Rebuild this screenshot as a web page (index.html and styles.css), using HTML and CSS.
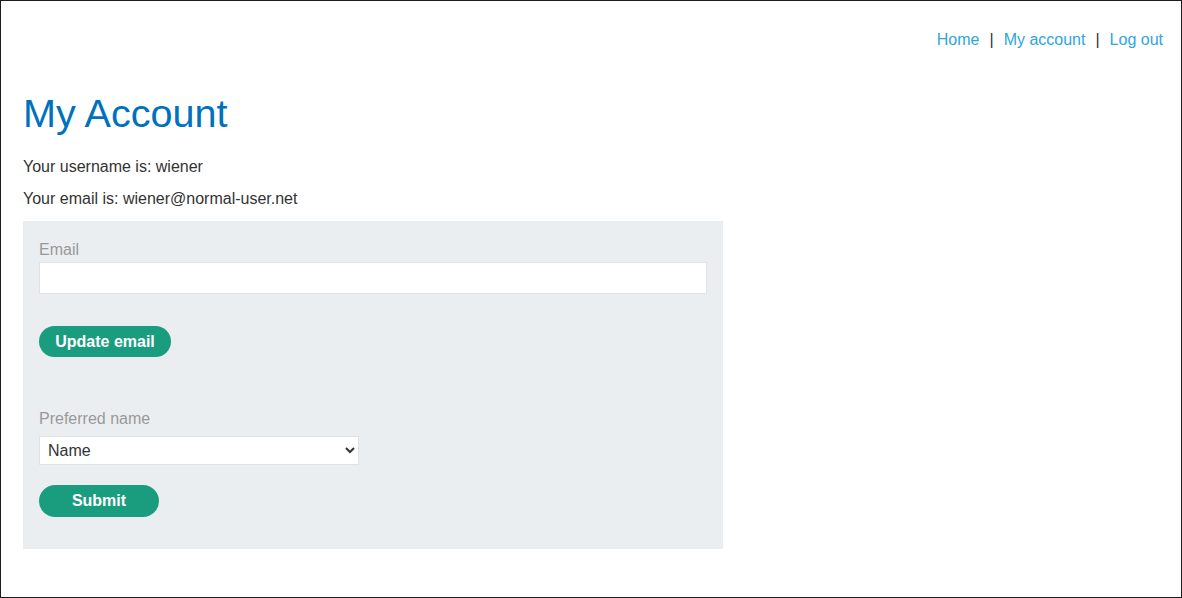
FILE: index.html
```html
<!DOCTYPE html>
<html lang="en">
<head>
<meta charset="utf-8">
<title>My Account</title>
<link rel="stylesheet" href="styles.css">
</head>
<body>
<div class="page">
  <header class="top-nav">
    <a href="#" class="nav-link">Home</a><span class="sep">|</span><a href="#" class="nav-link">My account</a><span class="sep">|</span><a href="#" class="nav-link">Log out</a>
  </header>
  <main class="content">
    <h1 class="title">My Account</h1>
    <p class="info">Your username is: wiener</p>
    <p class="info info-last">Your email is: wiener@normal-user.net</p>
    <div class="panel">
      <form class="form-email">
        <label class="field-label" for="email">Email</label>
        <input class="text-input" id="email" type="email">
        <button class="btn btn-update" type="button">Update email</button>
      </form>
      <form class="form-name">
        <label class="field-label" for="pname">Preferred name</label>
        <select class="select-input" id="pname">
          <option>Name</option>
        </select>
        <button class="btn btn-submit" type="button">Submit</button>
      </form>
    </div>
  </main>
</div>
</body>
</html>
```
FILE: styles.css
```css
html, body {
  margin: 0;
  padding: 0;
  background: #fff;
}
body {
  font-family: "Liberation Sans", Arial, sans-serif;
  font-size: 16px;
  line-height: 18px;
  color: #333;
}
.page {
  box-sizing: border-box;
  width: 1182px;
  height: 598px;
  border: 1px solid #1c1c1c;
  padding: 30px 18px 0 22px;
}
.top-nav {
  display: flex;
  justify-content: flex-end;
  line-height: 18px;
}
.nav-link {
  color: #2ea6dc;
  text-decoration: none;
}
.sep {
  color: #333;
  margin: 0 10px 0 10px;
}
.content {
  margin-top: 41px;
}
.title {
  margin: 0 0 22px 0;
  font-size: 39.6px;
  line-height: 46px;
  font-weight: normal;
  color: #0071bc;
}
.info {
  margin: 0 0 14px 0;
}
.info-last {
  margin-bottom: 13px;
}
.panel {
  width: 700px;
  box-sizing: border-box;
  background: #ebeef1;
  padding: 20px 16px 32px 16px;
}
.form-email, .form-name {
  display: flex;
  flex-direction: column;
  align-items: flex-start;
}
.field-label {
  color: #999;
  line-height: 18px;
}
.text-input {
  box-sizing: border-box;
  margin: 3px 0 0 0;
  width: 668px;
  height: 32px;
  border: 1px solid #e0e3e6;
  background: #fff;
  font-family: inherit;
  font-size: 16px;
}
.btn {
  box-sizing: border-box;
  border: none;
  border-radius: 20px;
  background: #1a9c7e;
  color: #fff;
  font-family: "Liberation Sans", Arial, sans-serif;
  font-weight: bold;
  font-size: 16px;
  cursor: pointer;
}
.btn-update {
  margin-top: 32px;
  height: 31px;
  width: 132px;
  padding: 0;
}
.form-name {
  margin-top: 53px;
}
.select-input {
  box-sizing: border-box;
  margin-top: 8px;
  width: 320px;
  height: 29px;
  border: 1px solid #e0e3e6;
  border-radius: 0;
  background: #fff;
  color: #333;
  font-family: inherit;
  font-size: 16px;
  padding: 0 4px;
}
.btn-submit {
  margin-top: 20px;
  height: 32px;
  width: 120px;
  padding: 0;
}
```
